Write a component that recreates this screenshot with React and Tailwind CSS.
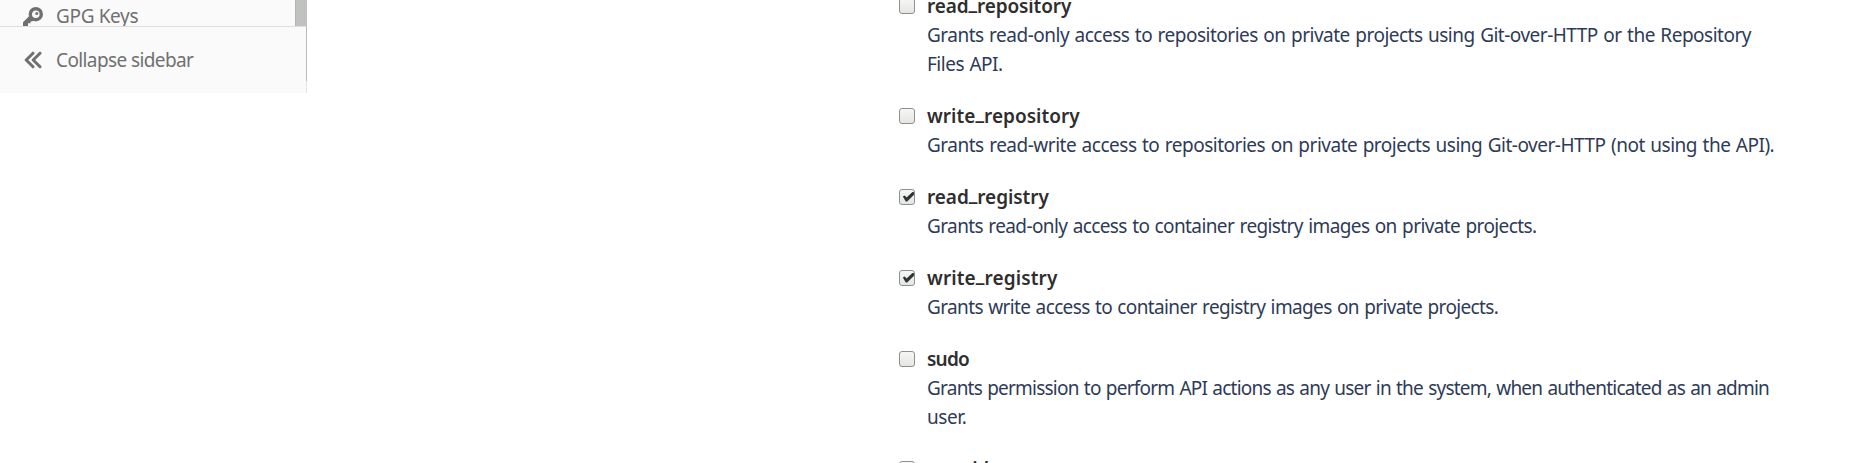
const scopes = [
  {
    name: ['read', 'repository'],
    checked: false,
    lines: ['Grants read-only access to repositories on private projects using Git-over-HTTP or the Repository', 'Files API.'],
    tracking: ['tracking-[-0.5px]', 'tracking-[-0.5px]'],
    titleTracking: 'tracking-[-0.12px]',
  },
  {
    name: ['write', 'repository'],
    checked: false,
    lines: ['Grants read-write access to repositories on private projects using Git-over-HTTP (not using the API).'],
    tracking: ['tracking-[-0.49px]'],
    titleTracking: 'tracking-[0.03px]',
  },
  {
    name: ['read', 'registry'],
    checked: true,
    lines: ['Grants read-only access to container registry images on private projects.'],
    tracking: ['tracking-[-0.61px]'],
    titleTracking: 'tracking-[-0.06px]',
  },
  {
    name: ['write', 'registry'],
    checked: true,
    lines: ['Grants write access to container registry images on private projects.'],
    tracking: ['tracking-[-0.63px]'],
    titleTracking: 'tracking-[0.12px]',
  },
  {
    name: ['sudo'],
    checked: false,
    lines: ['Grants permission to perform API actions as any user in the system, when authenticated as an admin', 'user.'],
    tracking: ['tracking-[-0.775px]', 'tracking-[-0.4px]'],
    titleTracking: 'tracking-[-0.8px]',
  },
  { name: ['openid'], checked: false, lines: [], tracking: [], titleTracking: 'tracking-[-0.4px]' },
];

function Checkbox({ checked }) {
  return (
    <span
      role="checkbox"
      aria-checked={checked}
      className="mt-[6px] mr-3 block size-4 shrink-0 rounded-[3px] border border-[#8f8f8c] bg-linear-to-b from-[#f6f6f6] to-[#e5e5e4]"
    >
      {checked && (
        <svg viewBox="0 0 14 14" className="size-3.5 overflow-visible">
          <path d="M2.8 6.4L4.8 5.6L6.6 7.4L12.4 2L14 2.2V4.8L7.2 11.6H5.8Z" fill="#2e3436" />
        </svg>
      )}
    </span>
  );
}

function Scope({ scope }) {
  return (
    <div className="flex">
      <Checkbox checked={scope.checked} />
      <div>
        <div className={`font-semibold whitespace-nowrap text-[#2e2e2e] ${scope.titleTracking}`}>
          {scope.name[0]}
          {scope.name[1] && <span className="relative -top-[3px] font-extrabold">_</span>}
          {scope.name[1]}
        </div>
        {scope.lines.map((line, i) => (
          <div key={line} className="whitespace-nowrap text-[#2e3b58] [word-spacing:1px]">
            <span className={scope.tracking[i]}>{line}</span>
          </div>
        ))}
      </div>
    </div>
  );
}

export default function App() {
  return (
    <div className="flex h-[463px] w-[1868px] overflow-hidden bg-white font-['Noto_Sans',sans-serif] text-[19px] leading-[29px]">
      <aside className="h-[93px] w-[307px] shrink-0 bg-[#fafafa] text-[#707070]">
        <div className="flex h-[26px] overflow-hidden">
          <div className="flex grow pl-[23px]">
            <svg viewBox="0 0 20 20" className="mt-[7px] size-5 shrink-0">
              <circle cx="12.8" cy="7.2" r="5.5" fill="none" stroke="#707070" strokeWidth="3.4" />
              <circle cx="13.8" cy="6.4" r="1.5" fill="#707070" />
              <path d="M7 8.2L11.8 13L8.8 14.4L7.5 14.4V16.2L5 16.2V19H0V15.2Z" fill="#707070" />
            </svg>
            <span className="mt-[2px] ml-[13px] tracking-[-0.35px]">GPG Keys</span>
          </div>
          <div className="h-[26px] w-3 border-l border-[#b3b5b3] bg-[#c0c2c0]" />
        </div>
        <div className="flex h-[67px]">
          <div className="flex grow border-t border-[#dfdfdf] pl-[24px]">
            <svg viewBox="0 0 18 18" className="mt-[24px] size-[18px] shrink-0">
              <path d="M9 2.2L2.2 9L9 15.8M16 2.2L9.2 9L16 15.8" fill="none" stroke="#707070" strokeWidth="3" strokeLinecap="round" strokeLinejoin="round" />
            </svg>
            <span className="mt-[19px] ml-[14px] tracking-[-0.61px]">Collapse sidebar</span>
          </div>
          <div className="w-px">
            <div className="h-[55px] bg-[#b9b9b9]" />
            <div className="h-3 bg-[#e5e5e5]" />
          </div>
        </div>
      </aside>
      <main className="-mt-[8px] flex flex-col gap-[23px] pl-[592px]">
        {scopes.map((scope) => (
          <Scope key={scope.name.join('_')} scope={scope} />
        ))}
      </main>
    </div>
  );
}
